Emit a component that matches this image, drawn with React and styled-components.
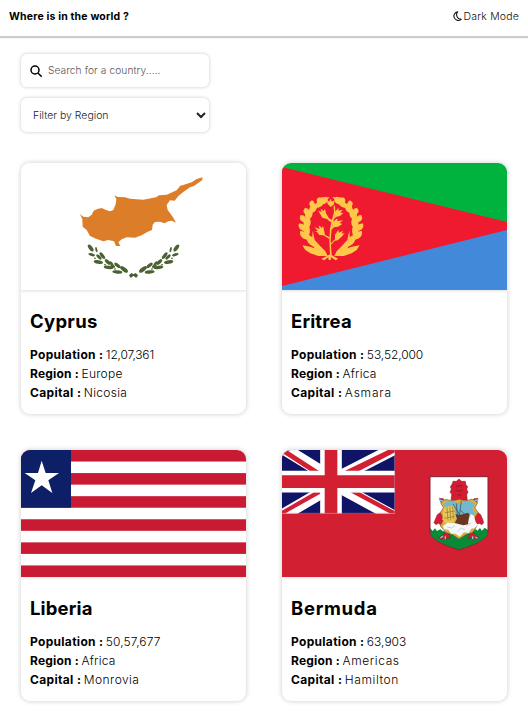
import React from "react";
import styled, { createGlobalStyle } from "styled-components";

const GlobalStyle = createGlobalStyle`
  * { box-sizing: border-box; }
  body {
    margin: 0;
    min-height: 100vh;
    background: #fff;
    color: #000;
    font-family: Inter, "Open Sans", sans-serif;
  }
`;

const Page = styled.div`
  min-height: 100vh;
`;

const Header = styled.header`
  display: flex;
  align-items: center;
  justify-content: space-between;
  height: 36px;
  padding: 0 9px 4px;
  box-shadow: 0 1px 1px 1px rgba(0, 0, 0, 0.2);
`;

const Brand = styled.h1`
  margin: 0;
  font-size: 10.5px;
  font-weight: 700;
  letter-spacing: ${(p) => p.$track}px;
`;

const ThemeToggle = styled.button`
  display: flex;
  align-items: center;
  gap: 2px;
  padding: 0;
  border: 0;
  background: none;
  color: #111;
  font: 350 10.5px Inter, sans-serif;
  letter-spacing: ${(p) => p.$track}px;
`;

const Filters = styled.div`
  display: flex;
  flex-direction: column;
  gap: 11px;
  width: 188px;
  margin: 18px 0 0 21px;
`;

const SearchBox = styled.label`
  display: flex;
  align-items: center;
  gap: 6px;
  height: 33px;
  padding: 0 9px;
  border-radius: 6px;
  box-shadow: 0 0 3px 1px rgba(0, 0, 0, 0.13);
`;

const SearchInput = styled.input`
  flex: 1;
  min-width: 0;
  padding: 0 0 2px;
  border: 0;
  outline: 0;
  background: none;
  font: 300 10.2px Inter, sans-serif;
  letter-spacing: ${(p) => p.$track}px;
  &::placeholder { color: #555; }
`;

const RegionSelect = styled.select`
  height: 34px;
  padding: 0 0 0 8px;
  border: 0;
  border-radius: 6px;
  background: #fff;
  color: #222;
  font: 350 10.5px Inter, sans-serif;
  letter-spacing: ${(p) => p.$track}px;
  box-shadow: 0 0 3px 1px rgba(0, 0, 0, 0.13);
`;

const Countries = styled.main`
  display: grid;
  grid-template-columns: 225px 225px;
  gap: 36px;
  margin: 31px 0 0 21px;
`;

const Card = styled.article`
  height: 251px;
  overflow: hidden;
  border-radius: 9px;
  box-shadow: 0 0 4px 1px rgba(0, 0, 0, 0.15);
`;

const Flag = styled.svg`
  display: block;
  width: 225px;
  height: 127px;
  box-shadow: 0 0 3px 1px rgba(0, 0, 0, 0.13);
`;

const Details = styled.div`
  padding: 18px 9px 0;
`;

const Name = styled.h2`
  margin: 0 0 11px;
  font-size: 18.5px;
  line-height: 26px;
  font-weight: 650;
  letter-spacing: ${(p) => p.$track}px;
`;

const Fact = styled.p`
  display: flex;
  gap: 2.5px;
  margin: 0;
  font-size: 12px;
  line-height: 19px;
`;

const Term = styled.span`
  font-weight: 700;
  letter-spacing: ${(p) => p.$track}px;
`;

const Value = styled.span`
  font-weight: 300;
  letter-spacing: ${(p) => p.$track}px;
`;

const oliveLeaves = [
  [242, 294, 12, 5.5, 52], [259, 299, 8, 3, 78], [245, 314, 10, 4.5, 15],
  [267, 321, 10, 4.5, 45], [277, 317, 12, 5, 52], [255, 325, 3, 2, 20],
  [265, 336, 14, 5.5, 10], [293, 336, 11, 5, 45], [304, 340, 8, 4, 45],
  [296, 352, 15, 5, 8], [285, 344, 3, 2, 20],
  [322, 346, 11, 5, 40], [308, 348, 8, 4, 30], [322, 366, 15, 5, 5],
  [315, 357, 3, 2, 20], [342, 358, 14, 6, 38],
];

const CyprusFlag = () => (
  <Flag viewBox="33 39 675 381" preserveAspectRatio="none">
    <path fill="#fff" d="M33 39h675v381H33z" />
    <path
      fill="#dc7e29"
      d="M210 192L220 200L235 202L245 194L251 182L262 177L275 174L288 180L300 184L310 180L317 163L319 148L313 136L323 141L345 142L360 146L400 149L438 142L447 136L470 134L500 121L511 107L522 104L545 97L560 87L578 82L576 91L553 107L540 112L520 126L505 138L494 152L480 151L470 165L473 180L488 200L498 218L485 212L475 214L464 220L450 215L435 216L428 224L426 240L412 246L395 256L375 263L350 262L335 268L325 277L331 288L318 288L312 274L295 270L280 274L258 266L240 258L230 240L218 230L217 208Z"
    />
    {[undefined, "translate(741 0) scale(-1 1)"].map((t, i) => (
      <g key={i} transform={t} fill="#4b6131">
        {oliveLeaves.map(([x, y, rx, ry, a], n) => (
          <ellipse key={n} cx={x} cy={y} rx={rx} ry={ry} transform={`rotate(${a} ${x} ${y})`} />
        ))}
        <path d="M357 376L364 369L382 379L384 372L378 383L368 376L362 383Z" />
      </g>
    ))}
  </Flag>
);

const wreathLeaves = [
  [137, 292, 47, 235, 2.1], [114, 269, 35, 228, 1.8], [112, 264, 44, 266, 2.1],
  [107, 243, 30, 228, 1.8], [108, 240, 40, 280, 2.3], [106, 217, 26, 238, 1.8],
  [109, 212, 38, 293, 2.3], [113, 195, 23, 252, 1.8], [118, 190, 36, 308, 2.1],
  [126, 174, 23, 271, 1.7], [134, 173, 34, 324, 1.8], [143, 160, 20, 292, 1.4],
  [149, 162, 28, 332, 1.6],
];

const EritreaFlag = () => (
  <Flag viewBox="36 39 675 381" preserveAspectRatio="none">
    <path fill="#00b33e" d="M36 39h675v190H36z" />
    <path fill="#4289da" d="M36 229h675v191H36z" />
    <path fill="#f01a30" d="M36 51l675 165v24L36 408z" />
    <g fill="#ffc84b">
      {[undefined, "translate(366 0) scale(-1 1)"].map((t, i) => (
        <g key={i} transform={t}>
          {wreathLeaves.map(([x, y, len, a, w], n) => (
            <path
              key={n}
              d={`M0 0C${len * 0.3} ${-6 * w} ${len * 0.75} ${-7 * w} ${len} 0C${len * 0.75} ${6 * w} ${len * 0.3} ${6 * w} 0 0`}
              transform={`translate(${x} ${y}) rotate(${a})`}
            />
          ))}
          <path d="M97 286L121 290L133 295L126 271L128 242L134 270L150 287L166 304L173 318L145 318L121 310L106 300Z" />
          <path d="M150 143l18-3-7 10-12 6zM166 141l13 1-8 7-8 5z" />
        </g>
      ))}
      <path d="M180 313l-2-43 2-34 7-31 5-18-1-20h4l1 20-4 20-7 29-3 34 3 45 19 11-7 5-14-9-1 8h-6l-1-8-13 9-8-4z" />
      <path d="M182 171l-9-9-3-13 8 6 3-9 5 9 8-4-3 13z" />
      <path d="M171 207l-14-4-7-12-5-9 10 4-3-10 9 7 4-7 3 14 9 15 11 6 1 9-11-6zM193 201l2-16 10-11 1 8 12-3-7 9 9 1-10 9-10 2-13 10z" />
      <path d="M186 233l2-16 11-10 4-1-2 7 18-2-10 8 8 3-13 8-12 2-12 12zM177 266l-17-10-12-1-7-9-7-2 9-1-9-11 15 5-3-11 10 8 3-7 4 18 2 10 14 7z" />
      <path d="M184 278l11-10 0-14 8-11 2-4 2 9 12-6-4 9 9-2-9 11-12 11-9 1-11 13z" />
    </g>
  </Flag>
);

const LiberiaFlag = () => (
  <Flag viewBox="33 30 675 381" preserveAspectRatio="none">
    <path fill="#fff" d="M33 30h675v381H33z" />
    {[0, 1, 2, 3, 4, 5].map((n) => (
      <rect key={n} x="33" y={30 + n * 69.27} width="675" height="34.64" fill="#c91a33" />
    ))}
    <path fill="#0d2067" d="M33 30h150v173H33z" />
    <path fill="#fff" d="M95 62L107 99L147 99L115 121L127 159L95 136L63 159L76 121L44 99L84 99Z" />
  </Flag>
);

const UnionJack = () => (
  <svg x="36" y="30" width="339" height="191" viewBox="0 0 339 191">
    <path fill="#101466" d="M0 0h339v191H0z" />
    <path stroke="#fff" strokeWidth="37" d="M-10-14L147 83M-10 203l157-92M345-8L147 94M349 207L147 97" />
    <path fill="#d21f31" d="M0 0v8l84 55h27L14 0zM318 0h21v7L231 63h-43zM0 182v9h8l115-64H96zM339 184v7h-14l-120-64h28z" />
    <path stroke="#fff" strokeWidth="65" d="M147 0v191M0 95h339" />
    <path stroke="#d21f31" strokeWidth="38" d="M147 0v191M0 95h339" />
    <path fill="none" stroke="#c98092" strokeWidth="2" d="M338 0v190H0" />
  </svg>
);

const CoatOfArms = () => (
  <g>
    <path fill="#fff" d="M480 110h174v166c0 22-38 38-87 54-49-16-87-32-87-54z" />
    <path fill="#078b36" d="M480 264L488 273L495 265L501 273L511 268L519 274H609L617 267L622 272L630 264L636 272L644 263L654 270V276C654 298 616 314 567 330C518 314 480 298 480 276Z" />
    <path fill="none" stroke="#842030" strokeWidth="3" d="M480 110h174v166c0 22-38 38-87 54-49-16-87-32-87-54z" />
    <g fill="#d51c33" stroke="#70202a" strokeWidth="1.5">
      <path d="M543 181L545 163L540 156L544 148L541 140L546 133L549 124L559 124L567 117L575 124L586 124L588 134L593 140L590 148L594 157L590 164L592 181Z" />
      <path d="M528 220L512 217L502 224L496 238L492 248L498 254L505 250L514 256L522 254L526 270L538 252L532 224ZM608 220L623 217L632 224L638 238L641 248L636 254L627 250L617 256L611 254L606 270L598 248Z" />
      <path d="M522 279L517 287L508 291L513 299L521 294L526 300L532 293L541 296L538 285L530 278ZM604 279L597 285L594 296L603 293L608 301L615 294L623 298L626 291L616 287L612 278Z" />
      <path d="M508 175L520 176L527 187L513 187ZM624 175L612 176L606 187L621 187Z" />
    </g>
    <path fill="#dcad43" stroke="#7b622d" strokeWidth="2" d="M512 188L527 178L547 183L567 178L588 183L606 177L623 188L615 203L624 218L612 236L621 258L607 278L589 283L567 297L546 283L528 278L511 258L522 236L511 218L520 203Z" />
    <path fill="#70b9d2" d="M521 191L536 183L567 190L600 183L614 192L607 205L616 220L600 235H538L521 219L528 204Z" />
    <path fill="#e8c75a" d="M522 203L551 195L558 231L550 248L527 250L517 238Z" />
    <path fill="none" stroke="#947628" strokeWidth="2" d="M531 202l3 40M540 199l2 42M548 198l2 40M521 235l34-6M525 218l30-5" />
    <path fill="#f6f7f9" d="M519 258L533 248L551 250L568 244L580 250L595 240L603 222L612 228L617 246L624 255L613 265L604 266L596 279L582 277L569 290L557 281L543 281L535 269L521 268Z" />
    <path fill="#693624" d="M556 222L569 225L594 218L598 223L594 253L580 256L554 249L561 236Z" />
    <path fill="none" stroke="#3b4245" strokeWidth="2" d="M562 224l-3-34M568 227l6-44M549 192l19 31M570 210l14 12" />
    <path fill="none" stroke="#a8b8c8" strokeWidth="2" d="M532 261l13 3 10-7M562 274l12-10 11 6M589 257l14-8" />
    <path fill="none" stroke="#671828" strokeWidth="2" d="M558 137l7 3 5-4 8 3M557 150l11 4 11-5M563 164l10 2" />
    <path fill="none" stroke="#8fc1dc" strokeWidth="4" d="M508 180l14 4M613 183l12-4M511 294l8-6M526 298v-9M608 298v-9M616 291l7 4" />
  </g>
);

const BermudaFlag = () => (
  <Flag viewBox="36 30 675 381" preserveAspectRatio="none">
    <path fill="#d21f31" d="M36 30h675v381H36z" />
    <UnionJack />
    <CoatOfArms />
  </Flag>
);

const countries = [
  { name: "Cyprus", track: 0.25, flag: CyprusFlag, facts: [["Population", "12,07,361", -0.2], ["Region", "Europe", 0.25], ["Capital", "Nicosia", 0.3]] },
  { name: "Eritrea", track: 0.15, flag: EritreaFlag, facts: [["Population", "53,52,000", -0.1], ["Region", "Africa", 0.2], ["Capital", "Asmara", 0.8]] },
  { name: "Liberia", track: 0.15, flag: LiberiaFlag, facts: [["Population", "50,57,677", 0.1], ["Region", "Africa", 0.2], ["Capital", "Monrovia", 0.45]] },
  { name: "Bermuda", track: 0.7, flag: BermudaFlag, facts: [["Population", "63,903", 0], ["Region", "Americas", 0.6], ["Capital", "Hamilton", 0.6]] },
];

const termTrack = { Population: 0.31, Region: 0.2, Capital: 0.34 };

export default function App() {
  return (
    <Page>
      <GlobalStyle />
      <Header>
        <Brand $track={0.17}>Where is in the world ?</Brand>
        <ThemeToggle $track={0.18}>
          <svg width="9" height="10" viewBox="0 0 9 10" fill="none" stroke="#111" strokeWidth="1.1" strokeLinejoin="round">
            <path d="M4.7.7A4.4 4.4 0 1 0 8.2 8.4 4.7 4.7 0 0 1 4.7.7z" />
          </svg>
          Dark Mode
        </ThemeToggle>
      </Header>
      <Filters>
        <SearchBox>
          <svg width="12" height="12" viewBox="0 0 12 12" fill="none" stroke="#000" strokeWidth="1.5">
            <circle cx="5" cy="5" r="4" />
            <path d="M8 8l3.7 3.7" />
          </svg>
          <SearchInput $track={0.08} placeholder="Search for a country....." />
        </SearchBox>
        <RegionSelect $track={-0.02}>
          <option>Filter by Region</option>
        </RegionSelect>
      </Filters>
      <Countries>
        {countries.map(({ name, track, flag: FlagArt, facts }) => (
          <Card key={name}>
            <FlagArt />
            <Details>
              <Name $track={track}>{name}</Name>
              {facts.map(([term, value, t]) => (
                <Fact key={term}>
                  <Term $track={termTrack[term]}>{term} :</Term>
                  <Value $track={t}>{value}</Value>
                </Fact>
              ))}
            </Details>
          </Card>
        ))}
      </Countries>
    </Page>
  );
}
